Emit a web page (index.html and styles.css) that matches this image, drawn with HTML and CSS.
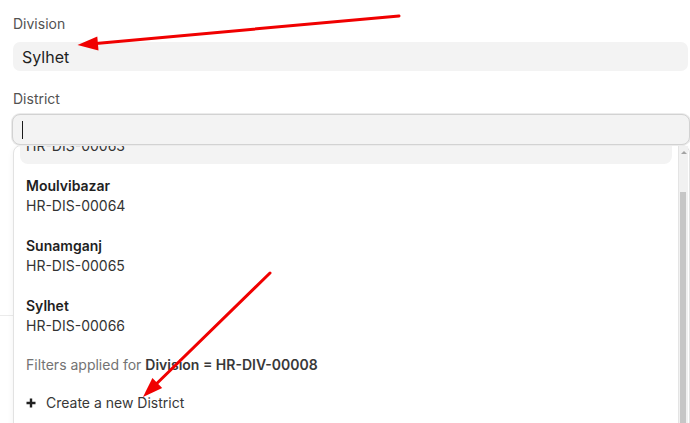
FILE: index.html
```html
<!DOCTYPE html>
<html lang="en">
<head>
<meta charset="utf-8">
<title>District link field</title>
<link rel="stylesheet" href="styles.css">
</head>
<body>
<div class="page">
  <div class="form">
    <div class="field">
      <label class="label">Division</label>
      <div class="input">Sylhet</div>
    </div>
    <div class="field field-district">
      <label class="label">District</label>
      <div class="combo">
        <div class="input input-active"><span class="caret"></span></div>
        <div class="dropdown">
          <div class="options" id="options">
            <div class="option option-active">
              <div class="option-name">Habiganj</div>
              <div class="option-code">HR-DIS-00063</div>
            </div>
            <div class="option">
              <div class="option-name">Moulvibazar</div>
              <div class="option-code">HR-DIS-00064</div>
            </div>
            <div class="option">
              <div class="option-name">Sunamganj</div>
              <div class="option-code">HR-DIS-00065</div>
            </div>
            <div class="option">
              <div class="option-name">Sylhet</div>
              <div class="option-code">HR-DIS-00066</div>
            </div>
            <div class="filter-note">Filters applied for <b>Division = HR-DIV-00008</b></div>
            <div class="create-row">
              <svg class="plus" width="10" height="10" viewBox="0 0 10 10"><path d="M5 0.5V9.5M0.5 5H9.5" stroke="#222" stroke-width="2.4" fill="none"/></svg>
              <span>Create a new District</span>
            </div>
          </div>
          <div class="scrollbar">
            <span class="scroll-arrow"></span>
            <span class="scroll-thumb"></span>
          </div>
        </div>
      </div>
    </div>
  </div>
  <div class="divider"></div>
</div>
<svg class="annotations" width="690" height="423" viewBox="0 0 690 423">
  <line x1="399" y1="16" x2="96" y2="43.4" stroke="#f00000" stroke-width="3" stroke-linecap="round"/>
  <polygon points="77.5,45 98.5,50.4 97.3,36.4" fill="#f00000"/>
  <line x1="270" y1="273" x2="156" y2="384.3" stroke="#f00000" stroke-width="3" stroke-linecap="round"/>
  <polygon points="143,397 162.2,388 152.4,378" fill="#f00000"/>
</svg>
<script src="script.js"></script>
</body>
</html>
```
FILE: styles.css
```css
html, body {
  margin: 0;
  padding: 0;
  background: #ffffff;
}
body {
  font-family: "Inter", "Noto Sans", sans-serif;
  color: #1f1f1f;
  width: 690px;
  height: 423px;
  overflow: hidden;
  position: relative;
}
.page {
  padding: 14px 2px 0 13px;
}
.form {
  display: flex;
  flex-direction: column;
  gap: 18px;
}
.field {
  display: flex;
  flex-direction: column;
}
.label {
  font-size: 14px;
  line-height: 20px;
  color: #525252;
  margin-bottom: 8px;
}
.field-district .label {
  margin-bottom: 5px;
}
.input {
  height: 29px;
  box-sizing: border-box;
  border-radius: 7px;
  background: #f3f3f3;
  padding: 0 9px;
  font-size: 16px;
  line-height: 20px;
  color: #1f1f1f;
  display: flex;
  align-items: center;
}
.combo {
  position: relative;
}
.input-active {
  position: relative;
  z-index: 2;
  height: 31px;
  margin: 0 -2px 0 -1px;
  border: 1px solid #d2d2d2;
  box-shadow: 0 0 0 1px #ebebeb;
  border-radius: 8px;
}
.caret {
  display: block;
  width: 1px;
  height: 18px;
  background: #1a1a1a;
  margin-top: 1px;
}
.dropdown {
  position: absolute;
  z-index: 1;
  top: 100%;
  left: 0;
  right: -2px;
  height: 300px;
  background: #ffffff;
  border: 1px solid #e2e2e2;
  border-radius: 8px;
  box-shadow: 0 2px 6px rgba(0, 0, 0, 0.06);
}
.options {
  height: 100%;
  box-sizing: border-box;
  margin-right: 11px;
  padding: 6px 6px 40px 6px;
  overflow-y: auto;
  scrollbar-width: none;
  display: flex;
  flex-direction: column;
  gap: 4px;
}
.options::-webkit-scrollbar {
  display: none;
}
.option {
  flex: none;
  padding: 8px 6px;
  border-radius: 8px;
  font-size: 14px;
  line-height: 20px;
}
.option-active {
  background: #f3f3f3;
}
.option-name {
  font-weight: 600;
  color: #1f1f1f;
}
.option-code {
  color: #333333;
}
.filter-note {
  flex: none;
  padding: 7px 6px;
  font-size: 14px;
  line-height: 20px;
  color: #737373;
}
.filter-note b {
  font-weight: 600;
  color: #383838;
}
.create-row {
  flex: none;
  display: flex;
  align-items: center;
  gap: 10px;
  padding: 7px 6px;
  font-size: 14px;
  line-height: 20px;
  color: #383838;
}
.plus {
  flex: none;
}
.scrollbar {
  position: absolute;
  top: 0;
  bottom: 0;
  right: 1px;
  width: 10px;
  background: #f1f1f1;
  border-left: 1px solid #e4e4e4;
  box-sizing: border-box;
}
.scroll-arrow {
  position: absolute;
  top: 5px;
  left: 2px;
  width: 0;
  height: 0;
  border-left: 3px solid transparent;
  border-right: 3px solid transparent;
  border-bottom: 3px solid #a3a3a3;
}
.scroll-thumb {
  position: absolute;
  top: 46px;
  left: 1px;
  width: 6px;
  height: 400px;
  background: #c6c6c6;
}
.divider {
  position: absolute;
  z-index: 0;
  top: 315px;
  left: 0;
  right: 0;
  height: 1px;
  background: #ebebeb;
}
.annotations {
  position: absolute;
  top: 0;
  left: 0;
  z-index: 5;
  pointer-events: none;
}
```
FILE: script.js
```js
document.getElementById('options').scrollTop = 44;
```
